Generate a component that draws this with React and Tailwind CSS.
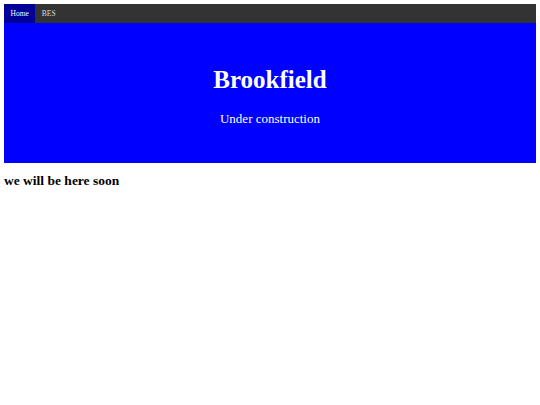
import React from 'react';

const App = () => {
  return (
    <div className="min-h-screen bg-white p-[4px] font-['Liberation_Serif',serif]">
      <nav className="flex h-[19px] bg-[#333333] text-[7.5px] text-white">
        <a className="flex items-center bg-[#000099] px-[6.5px]">Home</a>
        <a className="flex items-center px-[6.5px] text-[#dddddd]">BES</a>
      </nav>

      <header className="flex flex-col items-center bg-[#0000ff] pt-[42px] pb-[36px] text-white">
        <h1 className="text-[25px] font-bold leading-[29px]">Brookfield</h1>
        <p className="mt-[17px] text-[13px] leading-[16px]">Under construction</p>
      </header>

      <h3 className="mt-[9px] text-[13.5px] font-bold leading-[17px] text-black">we will be here soon</h3>
    </div>
  );
};

export default App;
